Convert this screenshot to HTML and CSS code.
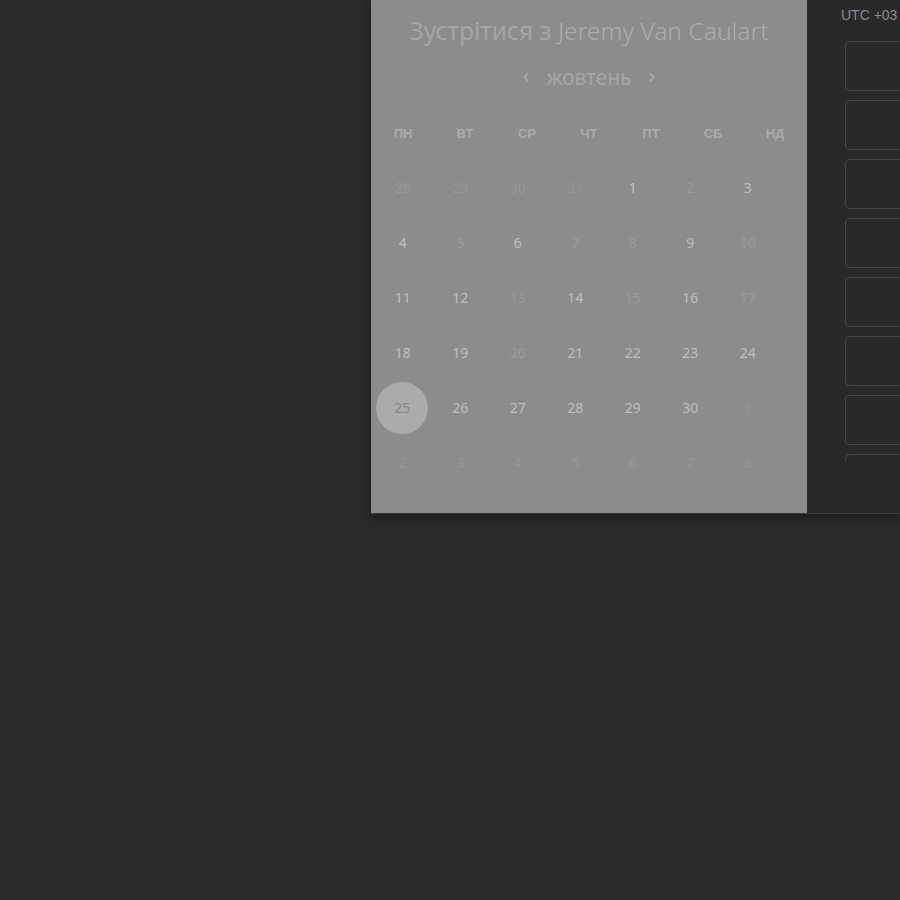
FILE: index.html
```html
<!DOCTYPE html>
<html lang="uk">
<head>
<meta charset="utf-8">
<link rel="stylesheet" href="styles.css">
</head>
<body>
<div class="page">
  <div class="modal">
    <section class="calendar">
      <h1 class="title">Зустрітися з <span class="name">Jeremy Van Caulart</span></h1>
      <div class="month-nav">
        <span class="chev">&#8249;</span>
        <span class="month">жовтень</span>
        <span class="chev">&#8250;</span>
      </div>
      <div class="weekdays">
        <span>ПН</span><span>ВТ</span><span>СР</span><span>ЧТ</span><span>ПТ</span><span>СБ</span><span>НД</span>
      </div>
      <div class="days">
        <span class="d other">28</span><span class="d other">29</span><span class="d other">30</span><span class="d other">31</span><span class="d on">1</span><span class="d off">2</span><span class="d on">3</span>
        <span class="d on">4</span><span class="d off">5</span><span class="d on">6</span><span class="d off">7</span><span class="d off">8</span><span class="d on">9</span><span class="d off">10</span>
        <span class="d on">11</span><span class="d on">12</span><span class="d off">13</span><span class="d on">14</span><span class="d off">15</span><span class="d on">16</span><span class="d off">17</span>
        <span class="d on">18</span><span class="d on">19</span><span class="d off">20</span><span class="d on">21</span><span class="d on">22</span><span class="d on">23</span><span class="d on">24</span>
        <span class="d sel">25</span><span class="d on">26</span><span class="d on">27</span><span class="d on">28</span><span class="d on">29</span><span class="d on">30</span><span class="d other">1</span>
        <span class="d other">2</span><span class="d other">3</span><span class="d other">4</span><span class="d other">5</span><span class="d other">6</span><span class="d other">7</span><span class="d other">8</span>
      </div>
    </section>
    <aside class="times">
      <div class="tz">UTC +03</div>
      <div class="slots">
        <div class="slot"></div><div class="slot"></div><div class="slot"></div><div class="slot"></div>
        <div class="slot"></div><div class="slot"></div><div class="slot"></div><div class="slot"></div>
      </div>
    </aside>
  </div>
</div>
</body>
</html>
```
FILE: styles.css
```css
html, body {
  margin: 0;
  padding: 0;
  background: #2b2b2b;
  height: 100%;
}
.page {
  width: 900px;
  height: 900px;
  overflow: hidden;
  font-family: "Noto Sans", "Open Sans", sans-serif;
}
.modal {
  margin-left: 371px;
  width: 529px;
  height: 513px;
  display: flex;
  box-shadow: 0 2px 12px rgba(0,0,0,0.45);
  border-bottom: 1px solid #3a3a3a;
}
.calendar {
  width: 436px;
  flex: none;
  background: #8c8c8c;
  display: flex;
  flex-direction: column;
  align-items: center;
}
.title {
  margin: 15px 0 0;
  font-size: 24.6px;
  font-weight: 400;
  line-height: 32px;
  color: #a6a6a6;
  white-space: nowrap;
}
.name {
  font-weight: 300;
  color: #adadad;
}
.month-nav {
  margin-top: 15px;
  display: flex;
  align-items: center;
  gap: 17px;
  height: 30px;
  color: #a6a6a6;
}
.month {
  font-size: 21px;
  line-height: 30px;
}
.chev {
  font-size: 22px;
  line-height: 26px;
  padding-bottom: 6px;
  color: #a8a8a8;
}
.weekdays {
  margin-top: 34px;
  align-self: stretch;
  padding-left: 1px;
  display: grid;
  grid-template-columns: repeat(7, 62px);
  font-family: "Liberation Sans", sans-serif;
  font-size: 13px;
  font-weight: 700;
  color: #ababab;
  text-align: center;
  line-height: 16px;
}
.days {
  margin-top: 18px;
  align-self: flex-start;
  margin-left: 3px;
  display: grid;
  grid-template-columns: repeat(7, 57.5px);
  grid-auto-rows: 55px;
  font-size: 14px;
}
.d {
  display: flex;
  align-items: center;
  justify-content: center;
}
.on { color: #bfbfbf; }
.off { color: #9a9a9a; }
.other { color: #979797; }
.sel {
  justify-self: center;
  width: 52px;
  height: 52px;
  margin-left: -1px;
  border-radius: 50%;
  background: #ababab;
  color: #888888;
  align-self: center;
}
.times {
  flex: 1;
  background: #292929;
  overflow: hidden;
}
.tz {
  margin: 5px 0 0 34px;
  font-family: "Liberation Sans", sans-serif;
  font-size: 14px;
  line-height: 20px;
  color: #8c8c8c;
  white-space: nowrap;
}
.slots {
  margin: 16px 0 0 38px;
  height: 421px;
  overflow: hidden;
  display: flex;
  flex-direction: column;
  gap: 9px;
}
.slot {
  flex: none;
  width: 120px;
  height: 48px;
  border: 1px solid #464646;
  border-radius: 4px;
}
```
